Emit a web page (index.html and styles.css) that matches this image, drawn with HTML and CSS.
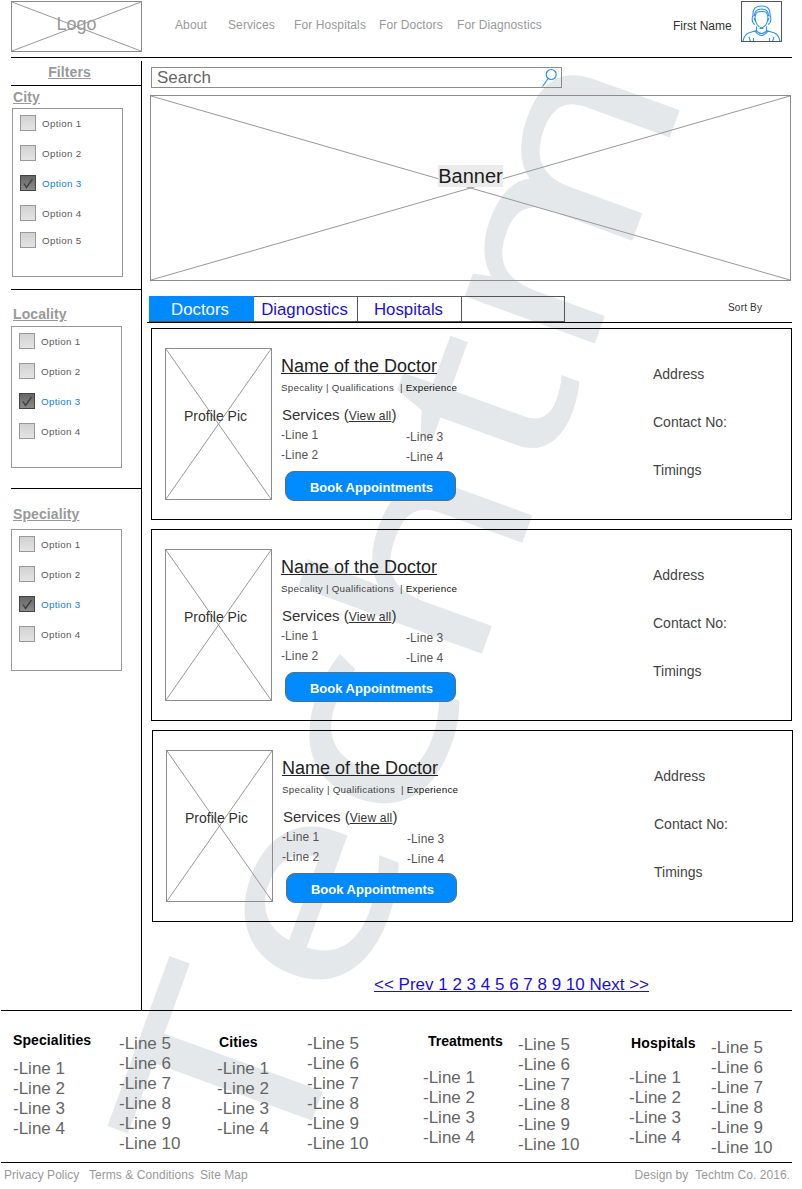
FILE: index.html
```html
<!DOCTYPE html>
<html lang="en">
<head>
<meta charset="utf-8">
<title>Doctors</title>
<link rel="stylesheet" href="styles.css">
</head>
<body>
<svg class="watermark" width="802" height="1189" viewBox="0 0 802 1189" aria-hidden="true">
  <text transform="translate(286 1188.3) rotate(-70) scale(1.27 1)" x="-3 147 294.9 427.9 590 687.8" y="0"><tspan class="cap">T</tspan>echtm</text>
</svg>
<svg class="defs" width="0" height="0">
  <symbol id="check" viewBox="0 0 14 14"><path d="M3 7.500 5.500 11.500 11.500 3" fill="none" stroke="#3f3f3f" stroke-width="1.4"/></symbol>
</svg>

<header class="header">
  <div class="logo cross">
    <svg viewBox="0 0 100 100" preserveAspectRatio="none"><path d="M0 0 100 100M100 0 0 100"/></svg>
    <span>Logo</span>
  </div>
  <nav class="nav"><a>About</a><a>Services</a><a>For Hospitals</a><a>For Doctors</a><a>For Diagnostics</a></nav>
  <span class="user">First Name</span>
  <svg class="avatar" viewBox="1 1 39 39">
    <g fill="none" stroke="#2b93f5" stroke-width="1.1">
      <path d="M15 13C15 11 16.500 10.500 20.500 10.500S26 11 26 13C27.500 15 27 20 25 23.500Q20.500 30 16 23.500C14 20 13.500 15 15 13Z"/>
      <path d="M12 15C11.500 8 14 5 20.500 5S29.500 8 29 15"/>
      <path d="M13.500 15C13.500 10 15.500 8 20.500 8S27.500 10 27.500 15"/>
      <path d="M12.500 14.500C10.500 16 10.500 22 14 23.500M28.500 14.500C30.500 16 30.500 22 27 23.500M13 17 14.500 20.500M28 17 26.500 20.500"/>
      <path d="M15.500 25.500V30Q20.500 35 25.500 30V25.500M18.500 27.500H22.500"/>
      <path d="M14 30Q20.500 39 27 30M15.500 29.500 7.500 32Q3 34 2 40.500M25.500 29.500 33.500 32Q38 34 39 40.500"/>
      <path d="M8 36 9.500 40.500M12.500 37V40.500M33 36 31.500 40.500M28.500 37V40.500"/>
    </g>
  </svg>
</header>

<div class="page">
  <aside class="sidebar">
    <h2 class="filters-title"><u>Filters</u></h2>
    <section class="filter city">
      <h3>City</h3>
      <ul class="options">
        <li><i></i>Option 1</li>
        <li><i></i>Option 2</li>
        <li class="on"><i><svg><use href="#check"/></svg></i>Option 3</li>
        <li><i></i>Option 4</li>
        <li class="tight"><i></i>Option 5</li>
      </ul>
    </section>
    <section class="filter locality">
      <h3>Locality</h3>
      <ul class="options">
        <li><i></i>Option 1</li>
        <li><i></i>Option 2</li>
        <li class="on"><i><svg><use href="#check"/></svg></i>Option 3</li>
        <li><i></i>Option 4</li>
      </ul>
    </section>
    <section class="filter speciality">
      <h3>Speciality</h3>
      <ul class="options">
        <li><i></i>Option 1</li>
        <li><i></i>Option 2</li>
        <li class="on"><i><svg><use href="#check"/></svg></i>Option 3</li>
        <li><i></i>Option 4</li>
      </ul>
    </section>
  </aside>

  <main class="main">
    <div class="search">
      <span>Search</span>
      <svg width="18" height="20" viewBox="0 0 18 20"><g fill="none" stroke="#2b93f5" stroke-width="1.2"><circle cx="10.200" cy="6.500" r="5"/><path d="M7.200 10.500 1.500 18.500"/></g></svg>
    </div>
    <div class="banner cross">
      <svg viewBox="0 0 100 100" preserveAspectRatio="none"><path d="M0 0 100 100M100 0 0 100"/></svg>
      <span>Banner</span>
    </div>
    <div class="tabs-row">
      <div class="tabs"><a class="active">Doctors</a><a>Diagnostics</a><a>Hospitals</a><a></a></div>
      <span class="sort">Sort By</span>
    </div>

    <article class="card">
      <div class="pic cross">
        <svg viewBox="0 0 100 100" preserveAspectRatio="none"><path d="M0 0 100 100M100 0 0 100"/></svg>
        <span>Profile Pic</span>
      </div>
      <div class="info">
        <h4>Name of the Doctor</h4>
        <p class="meta">Specality | Qualifications &nbsp;| <b>Experience</b></p>
        <p class="services">Services (<u>View all</u>)</p>
        <div class="lines"><p>-Line 1<br>-Line 2</p><p>-Line 3<br>-Line 4</p></div>
        <button>Book Appointments</button>
      </div>
      <div class="contact"><p>Address</p><p>Contact No:</p><p>Timings</p></div>
    </article>
    <article class="card">
      <div class="pic cross">
        <svg viewBox="0 0 100 100" preserveAspectRatio="none"><path d="M0 0 100 100M100 0 0 100"/></svg>
        <span>Profile Pic</span>
      </div>
      <div class="info">
        <h4>Name of the Doctor</h4>
        <p class="meta">Specality | Qualifications &nbsp;| <b>Experience</b></p>
        <p class="services">Services (<u>View all</u>)</p>
        <div class="lines"><p>-Line 1<br>-Line 2</p><p>-Line 3<br>-Line 4</p></div>
        <button>Book Appointments</button>
      </div>
      <div class="contact"><p>Address</p><p>Contact No:</p><p>Timings</p></div>
    </article>
    <article class="card last">
      <div class="pic cross">
        <svg viewBox="0 0 100 100" preserveAspectRatio="none"><path d="M0 0 100 100M100 0 0 100"/></svg>
        <span>Profile Pic</span>
      </div>
      <div class="info">
        <h4>Name of the Doctor</h4>
        <p class="meta">Specality | Qualifications &nbsp;| <b>Experience</b></p>
        <p class="services">Services (<u>View all</u>)</p>
        <div class="lines"><p>-Line 1<br>-Line 2</p><p>-Line 3<br>-Line 4</p></div>
        <button>Book Appointments</button>
      </div>
      <div class="contact"><p>Address</p><p>Contact No:</p><p>Timings</p></div>
    </article>

    <div class="pagination">&lt;&lt; Prev 1 2 3 4 5 6 7 8 9 10 Next &gt;&gt;</div>
  </main>
</div>

<footer class="footer">
  <div class="links">
    <div class="col specialities"><h5>Specialities</h5><p>-Line 1<br>-Line 2<br>-Line 3<br>-Line 4</p></div>
    <div class="more"><p>-Line 5<br>-Line 6<br>-Line 7<br>-Line 8<br>-Line 9<br>-Line 10</p></div>
    <div class="col cities"><h5>Cities</h5><p>-Line 1<br>-Line 2<br>-Line 3<br>-Line 4</p></div>
    <div class="more"><p>-Line 5<br>-Line 6<br>-Line 7<br>-Line 8<br>-Line 9<br>-Line 10</p></div>
    <div class="col treatments"><h5>Treatments</h5><p>-Line 1<br>-Line 2<br>-Line 3<br>-Line 4</p></div>
    <div class="more lower"><p>-Line 5<br>-Line 6<br>-Line 7<br>-Line 8<br>-Line 9<br>-Line 10</p></div>
    <div class="col hospitals"><h5>Hospitals</h5><p>-Line 1<br>-Line 2<br>-Line 3<br>-Line 4</p></div>
    <div class="more lowest"><p>-Line 5<br>-Line 6<br>-Line 7<br>-Line 8<br>-Line 9<br>-Line 10</p></div>
  </div>
  <div class="legal">
    <a class="privacy">Privacy Policy</a><a class="terms">Terms &amp; Conditions</a><a>Site Map</a>
    <span>Design by &nbsp;Techtm Co. 2016.</span>
  </div>
</footer>
</body>
</html>
```
FILE: styles.css
```css
* { box-sizing: border-box; margin: 0; padding: 0; }
body {
  width: 802px;
  height: 1189px;
  overflow: hidden;
  background: #fff;
  font-family: "Liberation Sans", Arial, sans-serif;
  position: relative;
  z-index: 0;
}
ul { list-style: none; }
.watermark { position: absolute; left: 0; top: 0; z-index: -1; overflow: visible; }
.watermark text { font-family: "Open Sans", sans-serif; font-size: 254px; fill: #e4e8eb; stroke: #e4e8eb; stroke-width: 2.5px; }
.watermark .cap { font-size: 263px; }
.defs { position: absolute; }

/* Crossed placeholder boxes */
.cross { display: grid; place-items: center; border: 1px solid #8c8c8c; }
.cross > * { grid-area: 1 / 1; }
.cross svg { width: 100%; height: 100%; display: block; min-height: 0; }
.cross path { stroke: #999; stroke-width: 1; fill: none; vector-effect: non-scaling-stroke; }

/* Header */
.header {
  display: flex;
  height: 58px;
  margin-left: 11px;
  width: 781px;
  padding-top: 1px;
  border-bottom: 1px solid #000;
  line-height: 16px;
  font-size: 12px;
}
.logo { width: 131px; height: 51px; color: #999; font-size: 18px; line-height: 20px; }
.logo span { margin-bottom: 5px; }
.nav {
  display: grid;
  grid-template-columns: 53px 66px 85px 78px 100px;
  margin: 16px 0 0 33px;
  height: 16px;
  color: #999;
  letter-spacing: .1px;
  white-space: nowrap;
}
.user { margin: 17px 0 0 116px; width: 68px; height: 16px; color: #333; white-space: nowrap; }
.avatar { width: 41px; height: 41px; border: 1px solid #555; }

/* Page columns */
.page { display: flex; margin-left: 11px; height: 952px; }
.sidebar { width: 131px; margin-top: 3px; border-right: 1px solid #000; color: #999; }
.filters-title {
  height: 25px;
  padding: 3px 13px 0 0;
  text-align: center;
  font-size: 14px;
  line-height: 16px;
  letter-spacing: .1px;
  border-bottom: 1px solid #000;
}
.filter h3 { font-size: 14px; line-height: 16px; letter-spacing: .1px; text-decoration: underline; }
.city { height: 204px; padding: 3px 0 0 1px; border-bottom: 1px solid #000; }
.locality { height: 199px; padding-top: 16px; border-bottom: 1px solid #000; }
.speciality { padding-top: 17px; }
.filter h3 { padding-left: 2px; margin-bottom: 4px; }
.city h3 { padding-left: 1px; margin-bottom: 3px; }
.speciality h3 { margin-bottom: 7px; }
.options { width: 111px; height: 142px; padding: 6px 7px; border: 1px solid #999; }
.city .options { height: 169px; }
.options li {
  display: flex;
  gap: 6px;
  height: 16px;
  margin-bottom: 14px;
  color: #5a5a5a;
  font-size: 9.8px;
  letter-spacing: .32px;
  line-height: 17px;
}
.options li.tight { margin-top: -3px; }
.options i { width: 16px; height: 16px; border: 1px solid #999; background: linear-gradient(#d2d2d2, #e4e4e4); }
.options .on { color: #0f80e0; }
.options .on i { border-color: #444; background: linear-gradient(#666, #8c8c8c); }
.options i svg { display: block; width: 14px; height: 14px; }

/* Main content */
.main { width: 660px; padding: 9px 0 0 8px; }
.search {
  display: flex;
  justify-content: space-between;
  width: 411px;
  height: 21px;
  margin-left: 1px;
  padding: 0 2px 0 5px;
  border: 1px solid #8c8c8c;
  color: #666;
  font-size: 17px;
  line-height: 19px;
}
.banner { width: 641px; height: 186px; margin-top: 7px; color: #1c1c1c; font-size: 20px; line-height: 22px; }
.banner span { background: #ebebeb; margin-bottom: 24px; }
.tabs-row { display: flex; width: 645px; height: 27px; margin: 15px 0 5px -3px; padding-left: 2px; border-bottom: 1px solid #000; }
.tabs { display: flex; width: 416px; height: 26px; border: 1px solid #555; }
.tabs a { flex: none; width: 104px; padding-right: 2px; text-align: center; border-right: 1px solid #555; color: #1c10d8; font-size: 16.8px; line-height: 25px; }
.tabs a:last-child { border: 0; width: 102px; }
.tabs .active { width: 105px; background: #008aff; border-color: #008aff; color: #fff; margin: -1px 0 0 -1px; line-height: 27px; }
.sort { margin: 4px 0 0 163px; font-size: 10px; line-height: 16px; letter-spacing: .2px; color: #333; }

.card { display: flex; width: 641px; height: 192px; margin: 0 0 9px 1px; padding: 19px 0 0 13px; border: 1px solid #000; }
.card.last { margin-left: 2px; }
.pic { width: 107px; height: 152px; color: #333; font-size: 14px; line-height: 16px; }
.pic span { margin: 0 6px 17px 0; }
.info { width: 381px; padding: 8px 0 0 9px; }
.info h4 { font-size: 18px; font-weight: 400; line-height: 20px; color: #222; text-decoration: underline; }
.meta { margin-top: 4px; font-size: 9.8px; line-height: 16px; letter-spacing: .25px; color: #444; }
.meta b { font-weight: 400; color: #111; }
.services { margin: 10px 0 0 1px; font-size: 15px; line-height: 18px; color: #333; }
.services u { font-size: 12px; letter-spacing: .2px; }
.lines { display: flex; font-size: 12px; line-height: 20px; color: #555; letter-spacing: .1px; }
.lines p { width: 125px; }
.lines p + p { margin-top: 2px; }
.info button {
  display: block;
  width: 171px;
  height: 30px;
  margin: 4px 0 0 4px;
  padding: 3px 0 0 2px;
  border: 1px solid #5c6c7a;
  border-radius: 9px;
  background: #008aff;
  color: #fff;
  font: bold 13px/16px "Liberation Sans", Arial, sans-serif;
}
.contact { padding-top: 18px; font-size: 14px; line-height: 16px; color: #444; }
.contact p { margin-bottom: 32px; }
.pagination { margin: 53px 0 0 224px; font-size: 17px; line-height: 20px; color: #1c10d0; text-decoration: underline; }

/* Footer */
.footer { width: 791px; margin-left: 1px; }
.links {
  display: grid;
  grid-template-columns: 106px 97px 91px 116px 95px 111px 82px 80px;
  height: 153px;
  padding-left: 12px;
  border: solid #000;
  border-width: 1px 0;
  color: #666;
  font-size: 17px;
  line-height: 20px;
  white-space: nowrap;
}
.links h5 { color: #000; font-size: 14px; line-height: 16px; letter-spacing: .1px; }
.col { padding-top: 21px; }
.col p { margin-top: 11px; }
.cities { padding-top: 23px; margin-left: 1px; }
.cities p { margin: 9px 0 0 0; }
.cities h5 { margin-left: 2px; }
.treatments { padding-top: 22px; }
.treatments p { margin-top: 19px; }
.treatments h5 { margin-left: 5px; letter-spacing: 0; }
.hospitals { padding-top: 24px; }
.hospitals p { margin-top: 17px; }
.hospitals h5 { margin-left: 2px; letter-spacing: .2px; }
.more { padding-top: 23px; }
.more.lower { padding-top: 24px; }
.more.lowest { padding-top: 27px; }
.legal { display: flex; padding: 4px 2px 0 3px; color: #999; font-size: 12px; letter-spacing: .05px; line-height: 16px; white-space: nowrap; }
.privacy { width: 85px; }
.terms { width: 111px; }
.legal span { margin-left: auto; }
```
